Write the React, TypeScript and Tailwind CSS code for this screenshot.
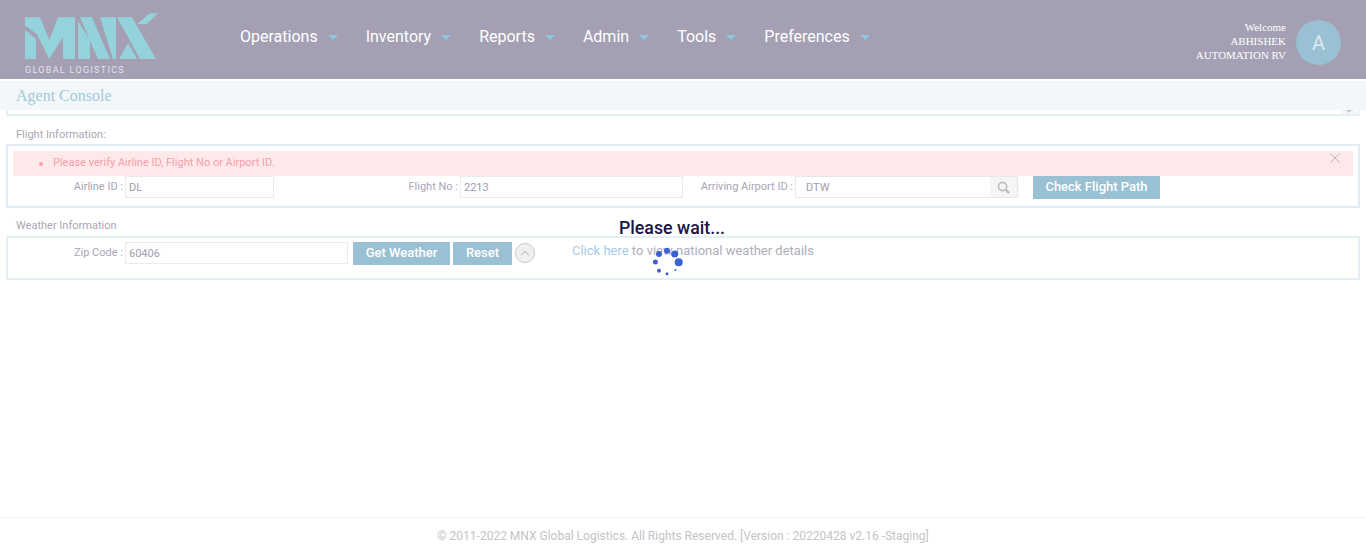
import React from "react";
import { X, ChevronUp } from "lucide-react";

const menu = ["Operations", "Inventory", "Reports", "Admin", "Tools", "Preferences"];

const Logo = () => (
  <svg width="135" height="47" viewBox="0 0 135 47" className="block">
    <g fill="#94d3dc">
      <polygon points="0,4.3 15,4.3 24.3,27 33,4.3 50,4.3 50,46 38,46 38,24 24.3,46 11.7,21 0,12.5" />
      <polygon points="0,17 11,26 11,46 0,46" />
      <polygon points="53,8 65,27 65,46 53,46" />
      <polygon points="55,4.3 67,4.3 85,46 73,46" />
      <polygon points="75,4.3 91,4.3 91,46 88,46" />
      <polygon points="92,4.3 107,4.3 131,46 115,46" />
      <polygon points="94.3,46 103,30 112,46" />
      <polygon points="125,0.3 133,0.3 122,11 112,11" />
    </g>
  </svg>
);

const Spinner = () => {
  const dots = [
    [8, 8, 3],
    [16, 4.7, 3],
    [23.7, 8, 3.5],
    [27.7, 16.3, 4],
    [24.4, 24, 1],
    [16, 27.7, 1.5],
    [8, 24.7, 2],
    [4.4, 16, 2.5],
  ];
  return (
    <svg width="32" height="32" viewBox="0 0 32 32" className="block">
      {dots.map(([cx, cy, r], i) => (
        <circle key={i} cx={cx} cy={cy} r={r} fill="#3a62d1" />
      ))}
    </svg>
  );
};

const SearchIcon = () => (
  <svg width="13" height="13" viewBox="0 0 14 14" fill="none" stroke="#bdbabf" className="block">
    <circle cx="6" cy="6" r="4.4" strokeWidth="1.7" />
    <line x1="9.4" y1="9.4" x2="13" y2="13" strokeWidth="2.6" />
  </svg>
);

const inputCls =
  "h-[22px] border border-[#e3eef3] bg-white px-[3px] pt-[1px] text-[11px] leading-[20px] text-[#a09cac]";
const labelCls = "text-[11px] text-[#aaa6b5] text-right leading-[22px]";
const btnCls =
  "h-[23px] pb-[2px] bg-[#99c1d3] text-white text-[13px] font-medium flex items-center justify-center";

export default function App() {
  return (
    <div className="relative min-h-[555px] bg-white font-['Roboto',sans-serif]">
      <header className="h-[79px] bg-[#a49fb3] flex items-start">
        <div className="w-[240px] pl-[25px] pt-[13px] shrink-0">
          <Logo />
          <div className="text-[9px] leading-[10px] tracking-[1.3px] text-[#e4e4ea] mt-[5px]">GLOBAL LOGISTICS</div>
        </div>
        <nav className="flex gap-[28px] pt-[27px]">
          {menu.map((m) => (
            <div key={m} className="flex items-center gap-[10px] text-white text-[16px] leading-[20px]">
              {m}
              <span className="border-x-[5px] border-t-[5px] border-x-transparent border-t-[#8cc8e0]" />
            </div>
          ))}
        </nav>
        <div className="ml-auto flex pt-[20px] pr-[25px]">
          <div className="text-right font-['Liberation_Serif',serif] text-[11px] leading-[14px] text-white">
            <div>Welcome</div>
            <div>ABHISHEK</div>
            <div>AUTOMATION RV</div>
          </div>
          <div className="ml-[10px] w-[45px] h-[45px] rounded-full bg-[#99c1d3] flex items-center justify-center text-[#dce9f0] text-[20px]">
            A
          </div>
        </div>
      </header>

      <div className="relative z-10 mt-[2px] h-[29px] bg-[#f2f7fa] pl-[16px] font-['Liberation_Serif',serif] text-[16px] leading-[29px] text-[#a3c9d9]">
        Agent Console
      </div>
      <div className="relative mx-[6px] h-[6px] rounded-b-[2px] border-x-2 border-b-2 border-[#e3f0f3]">
        <div className="absolute right-[1px] top-0 w-[16px] h-[4px] bg-[#f5f5f5] flex justify-center">
          <span className="border-x-[3px] border-t-[3px] border-x-transparent border-t-[#c8c8c8]" />
        </div>
      </div>

      <div className="pl-[16px] pt-[13px] text-[11px] leading-[12px] text-[#aaa6b5]">Flight Information:</div>
      <section className="mx-[6px] mt-[3px] h-[64px] border-2 border-[#e0ebf4] px-[5px] pt-[5px]">
        <div className="relative h-[25px] bg-[#fde9ea] flex items-center text-[11px] text-[#f6a0a8]">
          <span className="ml-[26px] mr-[10px] w-[4px] h-[4px] rounded-full bg-[#f6a0a8]" />
          Please verify Airline ID, Flight No or Airport ID.
          <X size={18} strokeWidth={1.2} className="absolute right-[9px] top-[-2px] text-[#b5b2b8]" />
        </div>
        <div className="flex items-start">
          <div className={`${labelCls} w-[110px]`}>Airline ID :</div>
          <div className={`${inputCls} ml-[2px] w-[149px]`}>DL</div>
          <div className={`${labelCls} w-[184px]`}>Flight No :</div>
          <div className={`${inputCls} ml-[2px] w-[223px]`}>2213</div>
          <div className={`${labelCls} w-[110px]`}>Arriving Airport ID :</div>
          <div className="ml-[2px] w-[223px] h-[22px] border border-[#e8e8e8] flex">
            <div className="flex-1 pl-[10px] pt-[1px] text-[11px] leading-[20px] text-[#a09cac]">DTW</div>
            <div className="w-[27px] bg-[#f5f5f5] flex items-center justify-center">
              <SearchIcon />
            </div>
          </div>
          <button className={`${btnCls} ml-[15px] w-[127px]`}>Check Flight Path</button>
        </div>
      </section>

      <div className="pl-[16px] pt-[12px] text-[11px] leading-[12px] text-[#aaa6b5]">Weather Information</div>
      <section className="mx-[6px] mt-[4px] h-[44px] border-2 border-[#e3f0f3] pt-[4px] pl-[5px] flex items-start">
        <div className={`${labelCls} w-[110px]`}>Zip Code :</div>
        <div className={`${inputCls} ml-[2px] w-[223px]`}>60406</div>
        <button className={`${btnCls} ml-[5px] w-[97px]`}>Get Weather</button>
        <button className={`${btnCls} ml-[3px] w-[59px]`}>Reset</button>
        <div className="ml-[3px] mt-[1px] w-[20px] h-[20px] rounded-full border border-[#c8c8c8] bg-[#f0f0f0] flex items-center justify-center">
          <ChevronUp size={14} strokeWidth={1.5} className="text-[#a0a0a0]" />
        </div>
        <div className="ml-[37px] text-[13px] leading-[18px] text-[#b0acbb]">
          <span className="text-[#a8cbe8]">Click here</span> to view national weather details
        </div>
      </section>

      <div className="absolute left-[600px] top-[217px] w-[144px] flex flex-col items-center">
        <div className="text-[17.8px] leading-[22px] text-[#1b1445] font-medium">Please wait...</div>
        <div className="mt-[7px] mr-[10px]"><Spinner /></div>
      </div>

      <footer className="absolute left-0 right-0 top-[517px] h-[38px] border-t border-[#f0f0f0] text-center text-[12px] leading-[36px] text-[#c4c4c4]">
        © 2011-2022 MNX Global Logistics. All Rights Reserved. [Version : 20220428 v2.16 -Staging]
      </footer>
    </div>
  );
}
